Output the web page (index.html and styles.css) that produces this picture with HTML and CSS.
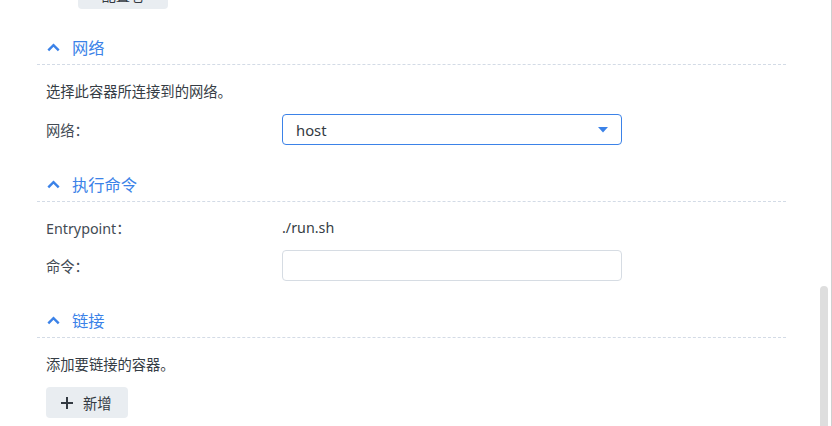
FILE: index.html
```html
<!DOCTYPE html>
<html lang="zh">
<head>
<meta charset="utf-8">
<link rel="stylesheet" href="styles.css">
</head>
<body>
<div class="page">
  <div class="main">
    <div class="top-cut">
      <button class="btn btn-top">配置卷</button>
    </div>

    <section class="section">
      <div class="sec-head">
        <svg class="chev" width="13" height="9" viewBox="0 0 13 9"><path d="M1.3 7.4 L6.5 2.2 L11.7 7.4" fill="none" stroke="#3b82e8" stroke-width="2.4"/></svg>
        <span>网络</span>
      </div>
      <div class="sec-body">
        <p class="desc">选择此容器所连接到的网络。</p>
        <div class="row row-ctl">
          <span class="label">网络：</span>
          <div class="select">
            <span>host</span>
            <svg class="caret" width="10" height="6" viewBox="0 0 10 6"><path d="M0 0 H10 L5 5.5 Z" fill="#3b82e8"/></svg>
          </div>
        </div>
      </div>
    </section>

    <section class="section">
      <div class="sec-head">
        <svg class="chev" width="13" height="9" viewBox="0 0 13 9"><path d="M1.3 7.4 L6.5 2.2 L11.7 7.4" fill="none" stroke="#3b82e8" stroke-width="2.4"/></svg>
        <span>执行命令</span>
      </div>
      <div class="sec-body">
        <div class="row">
          <span class="label">Entrypoint：</span>
          <span class="value">./run.sh</span>
        </div>
        <div class="row row-ctl">
          <span class="label">命令：</span>
          <div class="input"></div>
        </div>
      </div>
    </section>

    <section class="section">
      <div class="sec-head">
        <svg class="chev" width="13" height="9" viewBox="0 0 13 9"><path d="M1.3 7.4 L6.5 2.2 L11.7 7.4" fill="none" stroke="#3b82e8" stroke-width="2.4"/></svg>
        <span>链接</span>
      </div>
      <div class="sec-body">
        <p class="desc desc-link">添加要链接的容器。</p>
        <button class="btn btn-add">
          <svg width="14" height="14" viewBox="0 0 14 14"><path d="M7 1 V13 M1 7 H13" stroke="#333a42" stroke-width="2"/></svg>
          <span>新增</span>
        </button>
      </div>
    </section>
  </div>
  <div class="scroll">
    <div class="thumb"></div>
  </div>
</div>
</body>
</html>
```

FILE: styles.css
```css
* { box-sizing: border-box; }
html, body { margin: 0; padding: 0; background: #fff; }
body {
  font-family: "Noto Sans", "Noto Sans CJK SC", sans-serif;
  font-size: 14.3px;
  color: #363d45;
  overflow: hidden;
  width: 832px;
  height: 426px;
}
.page {
  display: flex;
  width: 832px;
  height: 426px;
}
.main {
  flex: 1;
  padding: 0 32px 0 37px;
}
.top-cut {
  height: 9px;
  overflow: hidden;
}
.btn {
  font-family: inherit;
  border: none;
  background: #e9edf1;
  border-radius: 4px;
  color: #333a42;
  font-size: 14.3px;
  display: flex;
  align-items: center;
}
.btn-top {
  margin-top: -21px;
  margin-left: 41px;
  width: 90px;
  height: 30px;
  justify-content: center;
}
.section {
  margin-top: 28px;
}
.section:first-of-type { margin-top: 27px; }
.sec-head {
  display: flex;
  align-items: center;
  gap: 12px;
  padding: 0 0 4px 10px;
  height: 29px;
  line-height: 24px;
  font-size: 16.3px;
  color: #3b82e8;
  border-bottom: 1px dashed #d3dbe6;
}
.chev { display: block; margin-top: -1px; }
.sec-body {
  padding: 10px 0 0 9px;
}
.desc {
  margin: 7px 0 12px;
  line-height: 20px;
  color: #363d45;
}
.desc-link { margin-bottom: 12px; }
.row {
  display: flex;
  align-items: center;
  height: 30px;
  margin-bottom: 8px;
}
.row-ctl { height: 31px; }
.row:last-child { margin-bottom: 0; }
.label {
  width: 236px;
  color: #434b54;
}
.value { color: #363d45; }
.select {
  width: 340px;
  height: 31px;
  border: 1px solid #3b82e8;
  border-radius: 4px;
  display: flex;
  align-items: center;
  justify-content: space-between;
  padding: 0 13px 0 13px;
  color: #333a42;
  font-size: 14.8px;
  flex: none;
}
.input {
  width: 340px;
  height: 31px;
  border: 1px solid #d6dce3;
  border-radius: 4px;
  flex: none;
}
.caret { display: block; }
.btn-add {
  width: 82px;
  height: 31px;
  padding: 0 0 0 14px;
  gap: 9px;
}
.btn-add svg { display: block; }
.scroll {
  width: 14px;
  padding: 286px 3px 0 2px;
  border-right: 1px solid #cfcfcf;
  background: #fff;
}
.thumb {
  height: 160px;
  background: #dedede;
  border-radius: 5px 5px 0 0;
}
```
